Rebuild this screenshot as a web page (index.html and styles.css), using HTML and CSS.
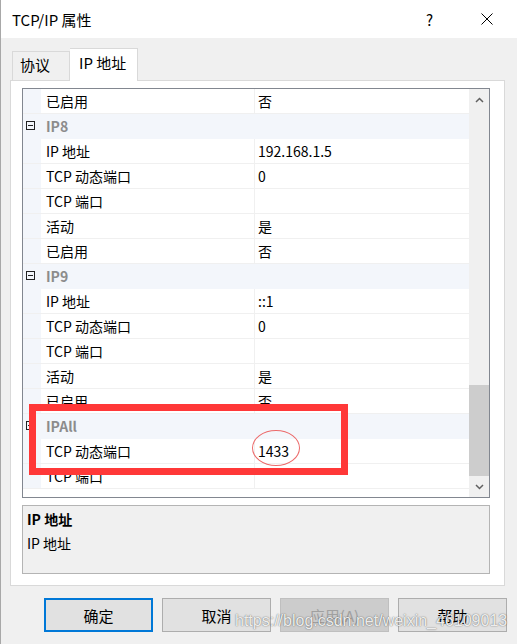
FILE: index.html
```html
<!DOCTYPE html>
<html lang="zh-CN">
<head>
    <meta charset="UTF-8">
    <title>TCP/IP 属性</title>
    <link rel="stylesheet" href="styles.css">
</head>
<body>
    <div class="window">
        <div class="titlebar">
            <span class="title">TCP/IP 属性</span>
            <span class="help">?</span>
            <svg class="close" width="12" height="12" viewBox="0 0 12 12">
                <path d="M0.5 0.5 L11.5 11.5 M11.5 0.5 L0.5 11.5" stroke="#000" stroke-width="1" fill="none"/>
            </svg>
        </div>

        <div class="tabs">
            <div class="tab">协议</div>
            <div class="tab active">IP 地址</div>
        </div>

        <div class="panel">
            <div class="grid">
                <div class="rows">
                    <div class="row"><span class="gutter"></span><span class="name">已启用</span><span class="value">否</span></div>
                    <div class="row cat"><span class="gutter"><span class="toggle"></span></span><span class="name">IP8</span></div>
                    <div class="row"><span class="gutter"></span><span class="name">IP 地址</span><span class="value">192.168.1.5</span></div>
                    <div class="row"><span class="gutter"></span><span class="name">TCP 动态端口</span><span class="value">0</span></div>
                    <div class="row"><span class="gutter"></span><span class="name">TCP 端口</span><span class="value"></span></div>
                    <div class="row"><span class="gutter"></span><span class="name">活动</span><span class="value">是</span></div>
                    <div class="row"><span class="gutter"></span><span class="name">已启用</span><span class="value">否</span></div>
                    <div class="row cat"><span class="gutter"><span class="toggle"></span></span><span class="name">IP9</span></div>
                    <div class="row"><span class="gutter"></span><span class="name">IP 地址</span><span class="value">::1</span></div>
                    <div class="row"><span class="gutter"></span><span class="name">TCP 动态端口</span><span class="value">0</span></div>
                    <div class="row"><span class="gutter"></span><span class="name">TCP 端口</span><span class="value"></span></div>
                    <div class="row"><span class="gutter"></span><span class="name">活动</span><span class="value">是</span></div>
                    <div class="row"><span class="gutter"></span><span class="name">已启用</span><span class="value">否</span></div>
                    <div class="row cat"><span class="gutter"><span class="toggle"></span></span><span class="name">IPAll</span></div>
                    <div class="row"><span class="gutter"></span><span class="name">TCP 动态端口</span><span class="value">1433</span></div>
                    <div class="row"><span class="gutter"></span><span class="name">TCP 端口</span><span class="value"></span></div>
                </div>
                <div class="scrollbar">
                    <div class="arrow">
                        <svg width="9" height="6" viewBox="0 0 9 6"><polyline points="1,5 4.5,1.5 8,5" stroke="#606060" stroke-width="1.5" fill="none"/></svg>
                    </div>
                    <div class="track"><div class="thumb"></div></div>
                    <div class="arrow">
                        <svg width="9" height="6" viewBox="0 0 9 6"><polyline points="1,1 4.5,4.5 8,1" stroke="#606060" stroke-width="1.5" fill="none"/></svg>
                    </div>
                </div>
            </div>

            <div class="desc">
                <div class="desc-title">IP 地址</div>
                <div class="desc-text">IP 地址</div>
            </div>
        </div>

        <div class="buttons">
            <button class="btn default">确定</button>
            <button class="btn">取消</button>
            <button class="btn disabled">应用(A)</button>
            <button class="btn">帮助</button>
        </div>

        <div class="mark-box"></div>
        <div class="mark-ellipse"></div>
        <div class="watermark">https://blog.csdn.net/weixin_46109013</div>
    </div>
</body>
</html>
```

FILE: styles.css
```css
body {
    margin: 0;
    background: #f0f0f0;
    font-family: "Noto Sans CJK SC", sans-serif;
    font-size: 14px;
    color: #000;
}
.window {
    position: relative;
    width: 517px;
    height: 644px;
    box-sizing: border-box;
    border-left: 1px solid #a8a8a8;
    overflow: hidden;
}
.titlebar {
    height: 38px;
    background: #fff;
    display: flex;
    align-items: center;
    padding-left: 11px;
}
.title {
    flex: 1;
    font-size: 15px;
}
.help {
    font-size: 15px;
    margin-right: 48px;
}
.close {
    margin-right: 24px;
}
.tabs {
    height: 42px;
    display: flex;
    align-items: flex-end;
    padding-left: 11px;
}
.tab {
    height: 29px;
    width: 58px;
    box-sizing: border-box;
    border: 1px solid #d9d9d9;
    border-bottom: none;
    padding-left: 7px;
    line-height: 26px;
    font-size: 15px;
}
.tab.active {
    position: relative;
    z-index: 1;
    height: 33px;
    width: 68px;
    margin-bottom: -1px;
    background: #fff;
    padding-left: 9px;
    line-height: 27px;
    border-left: none;
}
.panel {
    margin-left: 9px;
    width: 495px;
    height: 506px;
    box-sizing: border-box;
    background: #fff;
    border: 1px solid #d9d9d9;
    padding: 7px 0 0 11px;
}
.grid {
    width: 468px;
    height: 410px;
    box-sizing: border-box;
    border: 1px solid #828790;
    display: flex;
}
.rows {
    flex: 1;
    overflow: hidden;
}
.row {
    display: grid;
    grid-template-columns: 18px 213px 1fr;
    height: 25px;
    box-sizing: border-box;
    border-bottom: 1px solid #f0f0f0;
    line-height: 24px;
}
.gutter {
    background: #f3f6fb;
    position: relative;
}
.name {
    padding-left: 5px;
    white-space: nowrap;
}
.value {
    border-left: 1px solid #f0f0f0;
    padding-left: 3px;
}
.row.cat {
    background: #f3f6fb;
    border-bottom-color: #f3f6fb;
}
.row.cat .name {
    font-weight: bold;
    color: #8c8c8c;
}
.toggle {
    position: absolute;
    left: 3px;
    top: 7px;
    width: 9px;
    height: 9px;
    box-sizing: border-box;
    border: 1px solid #222;
}
.toggle::after {
    content: "";
    position: absolute;
    left: 1px;
    right: 1px;
    top: 3px;
    height: 1px;
    background: #222;
}
.scrollbar {
    width: 20px;
    background: #f0f0f0;
    display: flex;
    flex-direction: column;
}
.arrow {
    height: 21px;
    display: flex;
    align-items: center;
    justify-content: center;
}
.track {
    flex: 1;
    display: flex;
    flex-direction: column;
    justify-content: flex-end;
}
.thumb {
    height: 91px;
    background: #cdcdcd;
}
.desc {
    margin-top: 7px;
    width: 468px;
    height: 69px;
    box-sizing: border-box;
    background: #f0f0f0;
    border: 1px solid #b4b4b4;
    padding: 1px 4px;
    line-height: 24px;
}
.desc-title {
    font-weight: bold;
}
.buttons {
    display: flex;
    gap: 9px;
    padding: 12px 0 0 43px;
}
.btn {
    width: 109px;
    height: 34px;
    box-sizing: border-box;
    background: #e1e1e1;
    border: 1px solid #adadad;
    font-family: "Noto Sans CJK SC", sans-serif;
    font-size: 15px;
    color: #000;
    padding: 0;
}
.btn.default {
    border: 2px solid #0078d7;
}
.btn.disabled {
    background: #cccccc;
    border-color: #bfbfbf;
    color: #a0a0a0;
}
.mark-box {
    position: absolute;
    left: 28px;
    top: 404px;
    width: 319px;
    height: 71px;
    box-sizing: border-box;
    border: 7px solid #ff3838;
}
.mark-ellipse {
    position: absolute;
    left: 251px;
    top: 430px;
    width: 48px;
    height: 36px;
    box-sizing: border-box;
    border: 1px solid #ec6a6a;
    border-radius: 50%;
}
.watermark {
    position: absolute;
    left: 234px;
    top: 612px;
    font-family: "Liberation Sans", sans-serif;
    font-size: 16px;
    color: rgba(255, 255, 255, 0.9);
    text-shadow: 0 0 1px rgba(0, 0, 0, 0.5), 0 0 2px rgba(0, 0, 0, 0.25);
    white-space: nowrap;
}
```
